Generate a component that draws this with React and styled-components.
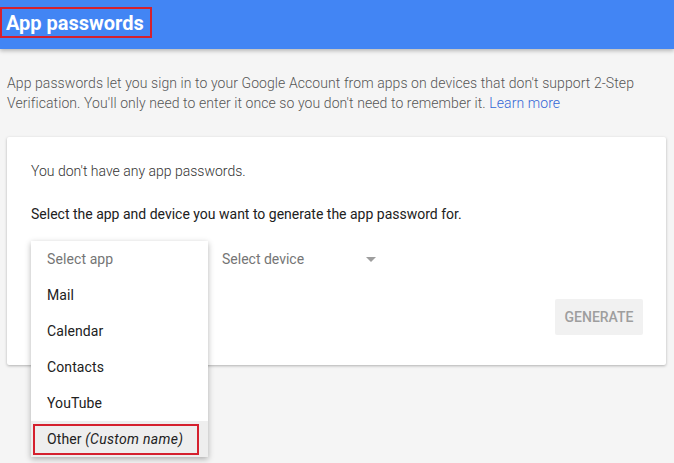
import React from "react";
import styled, { createGlobalStyle } from "styled-components";

const GlobalStyle = createGlobalStyle`
  html, body {
    margin: 0;
    padding: 0;
    background: #f5f5f5;
    font-family: Roboto, "Liberation Sans", sans-serif;
  }
  * { box-sizing: border-box; }
`;

const apps = ["Mail", "Calendar", "Contacts", "YouTube"];

const App = () => {
  return (
    <Page>
      <GlobalStyle />
      <Header>
        <Marked>
          <Title>App passwords</Title>
        </Marked>
      </Header>

      <Content>
        <Intro>
          App passwords let you sign in to your Google Account from apps on devices that don't support 2-Step
          Verification. You'll only need to enter it once so you don't need to remember it.{" "}
          <LearnMore href="#">Learn more</LearnMore>
        </Intro>

        <Card>
          <Note>You don't have any app passwords.</Note>
          <Prompt>Select the app and device you want to generate the app password for.</Prompt>

          <SelectRow>
            <AppSelect>
              {/* open menu lies over the card */}
              <Menu>
                <MenuItem $placeholder>Select app</MenuItem>
                {apps.map((a) => (
                  <MenuItem key={a}>{a}</MenuItem>
                ))}
                <MenuItem $active>
                  <MarkedItem>
                    Other&nbsp;<em>(Custom name)</em>
                  </MarkedItem>
                </MenuItem>
              </Menu>
            </AppSelect>
            <DeviceSelect>
              <span>Select device</span>
              <Arrow />
            </DeviceSelect>
          </SelectRow>

          <Actions>
            <GenerateButton disabled>Generate</GenerateButton>
          </Actions>
        </Card>
      </Content>
    </Page>
  );
};

export default App;

const Page = styled.div`
  min-height: 463px;
  background: #f5f5f5;
`;

const Header = styled.header`
  height: 49px;
  background: #4285f4;
  box-shadow: 0 2px 4px rgba(0, 0, 0, 0.25);
  padding-top: 7px;
`;

const Marked = styled.div`
  display: inline-flex;
  align-items: center;
  height: 31px;
  width: 152px;
  border: 2px solid #d5202e;
  padding-left: 4px;
`;

const Title = styled.h1`
  margin: 0;
  font-size: 20px;
  font-weight: 700;
  color: #fff;
`;

const Content = styled.main`
  padding: 24px 8px 0 7px;
`;

const Intro = styled.p`
  margin: 0 0 24px;
  font-size: 14px;
  line-height: 20px;
  font-weight: 300;
  letter-spacing: 0.08px;
  color: #555;
`;

const LearnMore = styled.a`
  color: #3367d6;
  text-decoration: none;
`;

const Card = styled.section`
  background: #fff;
  border-radius: 2px;
  box-shadow: 0 1px 3px rgba(0, 0, 0, 0.28);
  padding: 24px 23px 30px 24px;
`;

const Note = styled.p`
  margin: 0 0 23px;
  font-size: 14px;
  line-height: 20px;
  font-weight: 300;
  color: #333;
`;

const Prompt = styled.p`
  margin: 0 0 17px;
  font-size: 14px;
  line-height: 20px;
  font-weight: 400;
  color: #212121;
`;

const SelectRow = styled.div`
  display: flex;
  height: 36px;
`;

const AppSelect = styled.div`
  position: relative;
  width: 177px;
  height: 36px;
`;

const Menu = styled.ul`
  position: absolute;
  top: 0;
  left: 0;
  z-index: 2;
  width: 177px;
  margin: 0;
  padding: 0;
  list-style: none;
  background: #fff;
  box-shadow: 0 2px 6px rgba(0, 0, 0, 0.3);
`;

const MenuItem = styled.li`
  height: 36px;
  display: flex;
  align-items: center;
  padding: 0 16px;
  font-size: 14px;
  letter-spacing: 0.1px;
  color: ${({ $placeholder }) => ($placeholder ? "#757575" : "#212121")};
  background: ${({ $active }) => ($active ? "#eeeeee" : "transparent")};
  ${({ $active }) => $active && "padding: 0 0 0 2px;"}
`;

const MarkedItem = styled.div`
  display: flex;
  align-items: center;
  width: 166px;
  height: 31px;
  border: 2px solid #d5202e;
  padding-left: 12px;
  em {
    font-style: italic;
    letter-spacing: 0.3px;
  }
`;

const DeviceSelect = styled.div`
  display: flex;
  align-items: center;
  justify-content: space-between;
  width: 154px;
  margin-left: 14px;
  font-size: 14px;
  color: #757575;
`;

const Arrow = styled.span`
  width: 0;
  height: 0;
  border-left: 5px solid transparent;
  border-right: 5px solid transparent;
  border-top: 5px solid #9e9e9e;
`;

const Actions = styled.div`
  display: flex;
  justify-content: flex-end;
  margin-top: 22px;
`;

const GenerateButton = styled.button`
  height: 36px;
  width: 88px;
  border: none;
  border-radius: 2px;
  background: #f1f1f1;
  color: #9e9e9e;
  font-family: Roboto, "Liberation Sans", sans-serif;
  font-size: 14px;
  font-weight: 500;
  text-transform: uppercase;
  padding: 0;
`;
